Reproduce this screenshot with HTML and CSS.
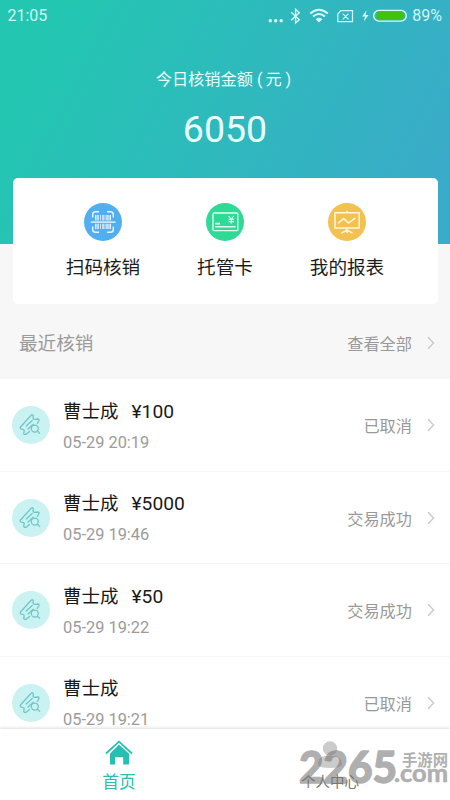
FILE: index.html
```html
<!DOCTYPE html>
<html lang="zh-CN">
<head>
<meta charset="utf-8">
<title>首页</title>
<link rel="stylesheet" href="styles.css">
</head>
<body>
<svg width="0" height="0" class="defs">
  <symbol id="ticket" viewBox="0 0 38 38">
    <g fill="none" stroke="#6fc7c7" stroke-width="1.3" stroke-linejoin="round" stroke-linecap="round">
      <path d="M17.5 25.5 14.2 28.2Q12.2 29 11.7 27.3L12.2 24.8Q12.2 23.4 10.6 23.4L8.7 22.8Q7.6 21.9 8.7 20.7L19.2 9.3Q20.8 8 21.4 9.9L21 11.7Q21 13.3 22.8 13.4L25.7 13Q27.6 13.3 26.8 15L25.3 17.3"/>
      <path d="M14.2 20 20.2 14.5M16 23 21.2 18.2"/>
      <circle cx="22.8" cy="22.6" r="3.5"/>
      <path d="M25.5 25.2 27.7 27.4"/>
    </g>
  </symbol>
  <symbol id="chevron" viewBox="0 0 8 14"><path d="M1 1.2 6.6 7 1 12.8" fill="none" stroke="#c8c8c8" stroke-width="1.3"/></symbol>
</svg>
<div class="app">
  <header class="hero">
    <div class="status">
      <span class="time">21:05</span>
      <svg class="status-icons" width="145" height="20" viewBox="264 5 145 20" fill="none" stroke="#d8f8f6" stroke-width="1.4">
        <g fill="#d8f8f6" stroke="none"><circle cx="270.3" cy="19.7" r="1.7"/><circle cx="275.7" cy="19.7" r="1.7"/><circle cx="281.2" cy="19.7" r="1.7"/></g>
        <path d="M291.2 11.3 299.3 18.8 295.6 22V8.4L299.3 11.7 291.2 19.2"/>
        <path d="M310.2 12.6Q319 5 327.8 12.6M313 15.6Q319 10.4 325 15.6" stroke-width="2"/>
        <path d="M315.6 18.2Q319 15.3 322.4 18.2L319 21.5Z" fill="#d8f8f6" stroke="none"/>
        <path d="M341 9.7H352.5V20.7H337.8V12.9ZM342.7 12.6 348.5 18.4M348.5 12.6 342.7 18.4" stroke-width="1.2"/>
        <path d="M366.6 9.3 362 15.5H365L363.8 20.4 368.6 14.1H365.5Z" fill="#d8f8f6" stroke="none"/>
        <rect x="373.7" y="9.4" width="32.6" height="10.7" rx="5.3"/>
        <rect x="376.2" y="10.7" width="28.2" height="8.1" rx="4" fill="#42c20c" stroke="none"/>
      </svg>
      <span class="battery">89%</span>
    </div>
    <div class="label">今日核销金额<span class="paren">(</span>元<span class="paren">)</span></div>
    <div class="amount">6050</div>
  </header>
  <nav class="card">
    <a class="action">
      <svg width="38" height="38" viewBox="0 0 38 38" fill="none" stroke="#e9f6ff">
        <circle cx="19" cy="19" r="19" fill="#51aff0" stroke="none"/>
        <path d="M8.7 14.5V11.5Q8.7 8.7 11.5 8.7H15M23 8.7H26.5Q29.3 8.7 29.3 11.5V14.5M8.7 23.5V26.5Q8.7 29.3 11.5 29.3H15M23 29.3H26.5Q29.3 29.3 29.3 26.5V23.5" stroke-width="1.4"/>
        <path d="M6.8 19.1H31.5" stroke-width="1.4"/>
        <path d="M11.8 12V17.5M14 12V17.5M19 12V17.5M23 12V17.5M26.3 12V17.5M11.8 20.8V26M14 20.8V26M19 20.8V26M23 20.8V26M26.3 20.8V26" stroke-width="1.4"/>
        <path d="M16.5 12V17.5M21 12V17.5M24.7 12V17.5M16.5 20.8V26M21 20.8V26M24.7 20.8V26" stroke-width=".8"/>
      </svg>
      <span>扫码核销</span>
    </a>
    <a class="action">
      <svg width="38" height="38" viewBox="0 0 38 38" fill="none" stroke="#e5fff3" stroke-width="1.3">
        <circle cx="19" cy="19" r="19" fill="#2fd996" stroke="none"/>
        <rect x="7" y="10" width="24.8" height="17.7" rx="1"/>
        <path d="M9.2 20.6H14M9.2 23.7H29.5" stroke-width="1.6"/>
        <path d="M22.6 13 25.2 16.2 27.8 13M25.2 16V20.6M22.6 16.4H27.8M22.6 18.6H27.8" stroke-width="1.1"/>
      </svg>
      <span>托管卡</span>
    </a>
    <a class="action">
      <svg width="38" height="38" viewBox="0 0 38 38" fill="none" stroke="#fff7df" stroke-width="1.5">
        <circle cx="19" cy="19" r="19" fill="#f2c150" stroke="none"/>
        <path d="M7 9.7H31.2V25.1H7ZM19 7.7V9.7M10.2 20.3 15.7 15.6 20.6 20 27.5 14.8M19 25V27L13.5 30.1M19 27 24.5 30.1M19 27V30"/>
      </svg>
      <span>我的报表</span>
    </a>
  </nav>
  <div class="section">
    <span class="section-title">最近核销</span>
    <span class="more">查看全部</span>
    <svg class="chev"><use href="#chevron"/></svg>
  </div>
  <main class="list">
    <div class="row">
      <svg class="avatar"><use href="#ticket"/></svg>
      <div class="info"><div class="name">曹士成<span class="money">¥100</span></div><div class="date">05-29 20:19</div></div>
      <span class="more">已取消</span><svg class="chev"><use href="#chevron"/></svg>
    </div>
    <div class="row">
      <svg class="avatar"><use href="#ticket"/></svg>
      <div class="info"><div class="name">曹士成<span class="money">¥5000</span></div><div class="date">05-29 19:46</div></div>
      <span class="more">交易成功</span><svg class="chev"><use href="#chevron"/></svg>
    </div>
    <div class="row">
      <svg class="avatar"><use href="#ticket"/></svg>
      <div class="info"><div class="name">曹士成<span class="money">¥50</span></div><div class="date">05-29 19:22</div></div>
      <span class="more">交易成功</span><svg class="chev"><use href="#chevron"/></svg>
    </div>
    <div class="row">
      <svg class="avatar"><use href="#ticket"/></svg>
      <div class="info"><div class="name">曹士成</div><div class="date">05-29 19:21</div></div>
      <span class="more">已取消</span><svg class="chev"><use href="#chevron"/></svg>
    </div>
  </main>
  <footer class="tabs">
    <a class="tab active">
      <svg width="28" height="28" viewBox="0 0 28 28"><path d="M1 13.5 14 1.7 27 13.5" fill="none" stroke="#27bfb1" stroke-width="1.7"/><path d="M14 4.5 24 13.7V24.5H18.2V17.2H10V24.5H5V13.7Z" fill="#27bfb1"/></svg>
      <span>首页</span>
    </a>
    <a class="tab">
      <svg width="28" height="28" viewBox="0 0 28 28" fill="#cbcbcb"><circle cx="14" cy="8.5" r="7.2"/><path d="M2 25Q2 16.5 9 16H19Q26 16.5 26 25Q25 28 14 28Q3 28 2 25Z"/></svg>
      <span>个人中心</span>
    </a>
  </footer>
  <svg class="watermark" width="152" height="46" viewBox="298 746 152 46">
    <text class="wm-number" x="299" y="782.5" textLength="98" lengthAdjust="spacingAndGlyphs">2265</text>
    <text class="wm-com" x="394" y="782" textLength="54" lengthAdjust="spacingAndGlyphs">.com</text>
    <text class="wm-cn" x="402" y="766" textLength="46" lengthAdjust="spacingAndGlyphs">手游网</text>
  </svg>
</div>
</body>
</html>
```

FILE: styles.css
```css
* { box-sizing: border-box; }
body { margin: 0; font-family: Roboto, "Noto Sans CJK SC", sans-serif; }
.defs { position: absolute; }
.app {
  position: relative;
  display: flex;
  flex-direction: column;
  width: 450px;
  height: 800px;
  overflow: hidden;
  background: #f7f7f7;
}
.hero {
  flex: none;
  height: 243.5px;
  background: linear-gradient(118deg, #23c7b1 10%, #3aabc9 92%);
  color: #e9fffd;
  text-align: center;
}
.status {
  display: flex;
  align-items: center;
  height: 31px;
  padding: 0 8px 0 7.5px;
  font-size: 16px;
  color: #d2f6f3;
}
.time { margin-right: auto; font-size: 16px; }
.status-icons { margin-right: 3px; }
.battery { width: 30px; font-size: 16px; white-space: nowrap; }
.label {
  margin: 37px 3px 0 0;
  font-size: 16.2px;
  line-height: 24px;
}
.paren { margin: 0 3px 0 4px; }
.paren:last-child { margin-right: 0; }
.amount {
  margin-top: 15px;
  font-size: 37.5px;
  line-height: 44px;
}
.card {
  flex: none;
  display: grid;
  grid-template-columns: repeat(3, 122px);
  justify-content: center;
  height: 125.5px;
  margin: -65.5px 12.5px 0;
  padding-top: 25px;
  border-radius: 5px;
  background: #fff;
}
.action {
  display: flex;
  flex-direction: column;
  align-items: center;
  font-size: 18.6px;
  line-height: 28px;
  color: #1c1c1c;
}
.action svg { margin-bottom: 13px; }
.section {
  flex: none;
  display: flex;
  align-items: center;
  height: 75.5px;
  padding: 3px 15px 0 19px;
  color: #9b9b9b;
}
.section-title { margin: -2px auto 0 0; font-size: 18.6px; }
.more { font-size: 16.2px; color: #999; }
.chev { flex: none; width: 8px; height: 14px; margin-left: 15px; }
.list {
  flex: 1;
  min-height: 0;
  overflow: hidden;
  background: #fff;
}
.row {
  display: flex;
  align-items: center;
  height: 92.6px;
  padding: 1px 15px 0 12px;
  border-bottom: 1px solid #f5f5f5;
}
.avatar {
  width: 38px;
  height: 38px;
  border-radius: 50%;
  background: #caf2f2;
}
.info { margin: 0 auto 0 13px; padding-top: 2px; }
.name {
  font-size: 18.5px;
  line-height: 31px;
  color: #191919;
}
.money { margin-left: 13px; font-size: 19.2px; }
.date {
  font-size: 16.4px;
  line-height: 29px;
  color: #9b9b9b;
}
.tabs {
  flex: none;
  display: flex;
  justify-content: center;
  height: 71px;
  padding: 10.5px 1px 0 0;
  background: #fff;
  box-shadow: 0 -1px 3px rgba(0, 0, 0, .14);
  z-index: 1;
}
.tab {
  display: flex;
  flex-direction: column;
  align-items: center;
  width: 211px;
  font-size: 16.8px;
  line-height: 25px;
  color: #777;
}
.tab span { margin-top: 2px; }
.tab:last-child { font-size: 14.5px; }
.tab.active { color: #27bfb1; }
.watermark {
  position: absolute;
  right: 0;
  bottom: 8px;
  z-index: 2;
  font-weight: 900;
  fill: #777;
  stroke: #777;
  stroke-linejoin: round;
  opacity: .58;
}
.wm-number { font-family: Lato, sans-serif; font-size: 44px; stroke-width: 1.4px; }
.wm-com { font-family: Lato, sans-serif; font-size: 25px; font-weight: 700; stroke-width: .6px; }
.wm-cn { font-family: "Noto Sans CJK SC", sans-serif; font-size: 15.5px; font-weight: 700; stroke: none; }
```
